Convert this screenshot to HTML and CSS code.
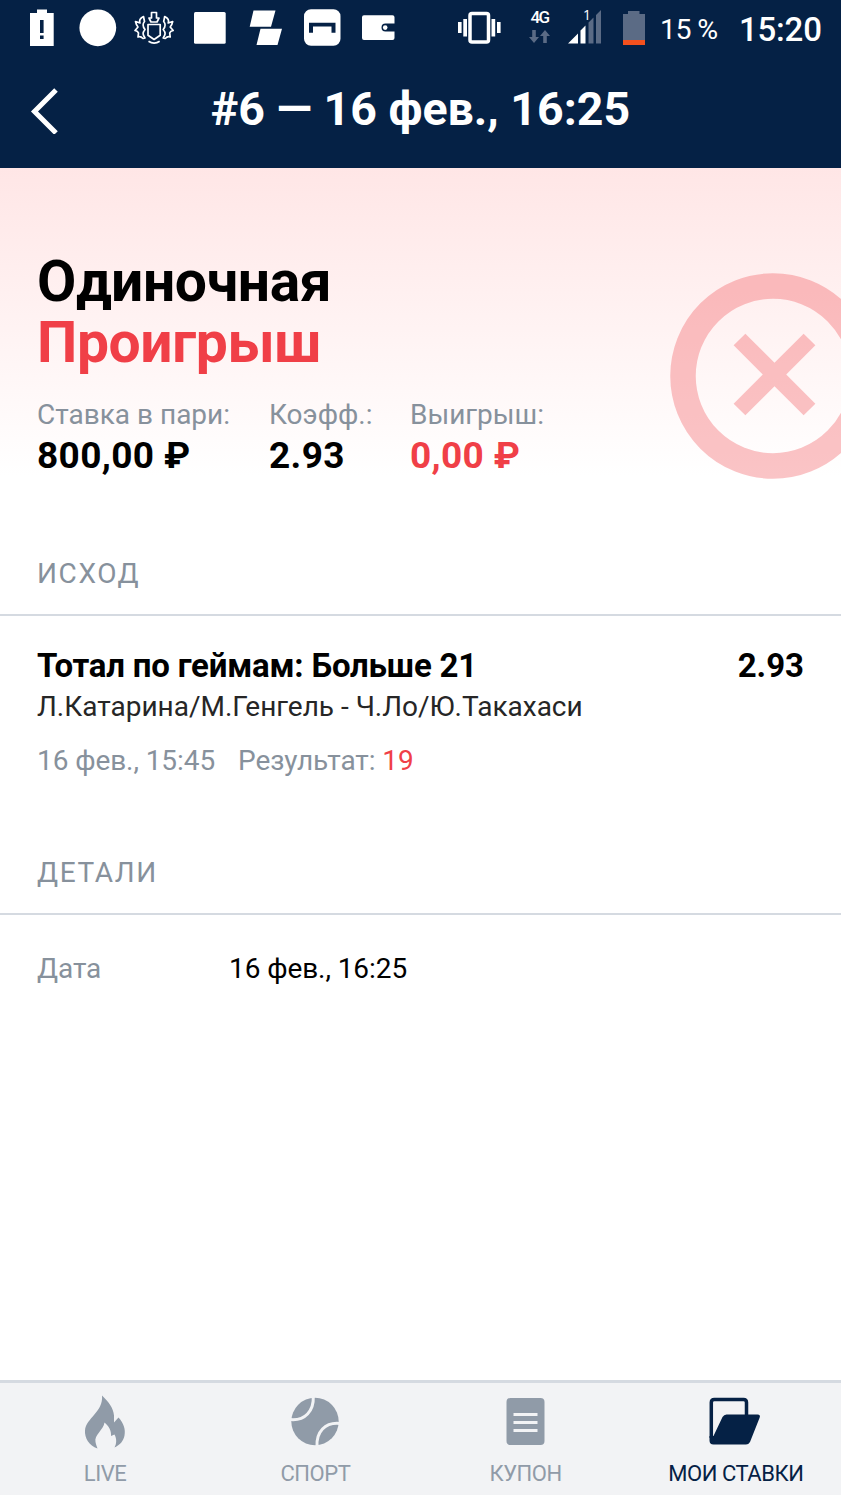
FILE: index.html
```html
<!DOCTYPE html>
<html lang="ru">
<head>
<meta charset="utf-8">
<title>#6 — 16 фев., 16:25</title>
<link rel="stylesheet" href="styles.css">
</head>
<body>
<div class="app">
  <div class="status">
    <svg class="status-left" width="400" height="56" viewBox="0 0 400 56" fill="#fff">
      <path fill-rule="evenodd" d="M30 13h7v-3.500h10V13h6.700v33H30zM40 20v13h3.600V20zM40 35.500V39h3.600v-3.500z"/>
      <circle cx="97.800" cy="27.800" r="18.400"/>
      <g fill="none" stroke="#fff" stroke-width="1.700" stroke-linejoin="round">
        <path d="M148 24.500h12.200v10.800l-6.100 4.200-6.100-4.200z"/>
        <path d="M151.500 12.500h5v5.500h2.500l-2 4h-6l-2-4h2.500z"/>
        <path d="M143.500 16.500c-4 2-4.500 4-3.500 6.500l-4.500-1.500c.5 2.500 1 4 2.500 5.500l-3 3.500c2 .3 3 .8 3.500 2.500l-.5 4c2-.8 3-.6 5 1.500l2-.5c-2-3-3-5 0-8.500-2.500-3-3-5-.5-8zM164.700 16.500c4 2 4.500 4 3.500 6.500l4.500-1.500c-.5 2.500-1 4-2.500 5.500l3 3.500c-2 .3-3 .8-3.500 2.500l.5 4c-2-.8-3-.6-5 1.500l-2-.5c2-3 3-5 0-8.500 2.500-3 3-5 .5-8z"/>
        <path d="M148.500 41.300q5.600 3.600 11.200 0"/>
      </g>
      <rect x="194" y="12" width="31.700" height="31.700" rx="1.500"/>
      <path d="M253.500 10.500h22l-4.500 16.300h-21.300zM260.500 28.800h21.500L277.500 45h-21z"/>
      <path fill-rule="evenodd" d="M311 9.300h22.500a7 7 0 0 1 7 7v22.500a7 7 0 0 1-7 7H311a7 7 0 0 1-7-7V16.300a7 7 0 0 1 7-7zM309 22.700v10h4v-6.200h18.500v6.200h4v-10z"/>
      <path d="M364 15.300h28.500a2 2 0 0 1 2 2v6.200h-9a4 4 0 0 0 0 8h9v6.500a2 2 0 0 1-2 2H364a2 2 0 0 1-2-2V17.300a2 2 0 0 1 2-2z"/>
      <circle cx="385.200" cy="27.600" r="2.300"/>
    </svg>
    <svg class="vibrate" width="43" height="56" viewBox="0 0 43 56" fill="#fff">
      <rect x="12" y="13.500" width="18.500" height="28.500" rx="2" fill="none" stroke="#fff" stroke-width="3.500"/>
      <path d="M0 22h3.600v11H0zM5.300 19h3.700v17.500H5.300zM33.500 19h3.700v17.500h-3.700zM39 22h3.600v11H39z"/>
    </svg>
    <div class="network">
      <span>4G</span>
      <svg width="21" height="14" viewBox="0 0 21 14" fill="#5b6b85"><path d="M3.200 0h3.600v7H10l-5 6-5-6h3.200zM14.200 13h3.600V6H21l-5-6-5 6h3.200z"/></svg>
    </div>
    <div class="signal">
      <svg width="34" height="34" viewBox="0 0 34 34"><path fill="#fff" d="M0 33.500L10 23.500v10zM12.500 20.500l5-5v18h-5z"/><path fill="#5b6b85" d="M20.500 12.500l5-5v26h-5zM28 5l5-5v33.500h-5z"/></svg>
      <span>1</span>
    </div>
    <svg class="battery" width="22" height="34" viewBox="0 0 22 34"><path fill="#5b6b85" d="M0 3h5V0h11.500v3H22v26H0z"/><path fill="#f4511e" d="M0 29h22v5H0z"/></svg>
    <span class="percent">15 %</span>
    <span class="clock">15:20</span>
  </div>
  <header class="header">
    <svg class="back" width="30" height="46" viewBox="0 0 30 46"><path d="M27 2L5.500 23.500 27 45" fill="none" stroke="#fff" stroke-width="5"/></svg>
    <h1 class="title">#6 — 16 фев., 16:25</h1>
  </header>
  <main class="content">
    <section class="hero">
      <h2 class="kind">Одиночная</h2>
      <p class="outcome">Проигрыш</p>
      <dl class="stats">
        <div class="stat stat-stake"><dt>Ставка в пари:</dt><dd>800,00 ₽</dd></div>
        <div class="stat stat-odds"><dt>Коэфф.:</dt><dd>2.93</dd></div>
        <div class="stat stat-win"><dt>Выигрыш:</dt><dd>0,00 ₽</dd></div>
      </dl>
      <svg class="badge" width="206" height="206" viewBox="0 0 206 206" fill="none" stroke="#f03f47" stroke-opacity=".31">
        <circle cx="103" cy="103" r="90" stroke-width="25.500"/>
        <path transform="translate(104.500 101.500) rotate(45)" d="M-8.300-49.500H8.300V-8.300H49.500V8.300H8.300V49.500H-8.300V8.300H-49.500V-8.300H-8.300z" fill="#f03f47" fill-opacity=".31" stroke="none"/>
      </svg>
    </section>
    <h3 class="section">ИСХОД</h3>
    <article class="bet">
      <div class="bet-main"><span class="market">Тотал по геймам: Больше 21</span><span class="odds">2.93</span></div>
      <div class="players">Л.Катарина/М.Генгель - Ч.Ло/Ю.Такахаси</div>
      <div class="meta"><span class="when">16 фев., 15:45</span><span class="result">Результат: <b>19</b></span></div>
    </article>
    <h3 class="section section-details">ДЕТАЛИ</h3>
    <div class="detail"><span class="detail-key">Дата</span><span class="detail-value">16 фев., 16:25</span></div>
  </main>
  <nav class="tabs">
    <a class="tab">
      <svg width="60" height="60" viewBox="0 0 60 60"><path fill="#909ba8" d="M27 2.500C33 8 38.500 15 39 22.500V29.500L43.500 24.500C48.500 30 50.800 36 49.500 42.500 48.500 48 45 52 39.500 54.500 41.500 51 42 46 39.500 41.500L36 43C36.500 38 34 33 29.500 29.500 28.500 37 19 42 20.500 49 21 52 22 54 22.500 55.500 14 52.500 9.500 45 10 37.500 11 25 28.500 19 27 2.500z"/></svg>
      <span>LIVE</span>
    </a>
    <a class="tab">
      <svg width="60" height="60" viewBox="0 0 60 60"><circle cx="30" cy="28.500" r="23.700" fill="#909ba8"/><path d="M5 26.500C20 28 29 18 28.300 3M55 30.500C40 29 31 39 32 54" fill="none" stroke="#f2f3f5" stroke-width="3"/></svg>
      <span>СПОРТ</span>
    </a>
    <a class="tab">
      <svg width="60" height="60" viewBox="0 0 60 60"><rect x="10.500" y="5" width="38" height="47" rx="4" fill="#909ba8"/><path d="M17.500 21.500h24M17.500 29.500h24M17.500 37.500h24" stroke="#f2f3f5" stroke-width="2.800"/></svg>
      <span>КУПОН</span>
    </a>
    <a class="tab tab-active">
      <svg width="60" height="60" viewBox="1 0 60 60"><path d="M6.300 45V9.500Q6.300 6.500 9.300 6.500H38.500Q41.500 6.500 41.500 9.500V24" fill="none" stroke="#052145" stroke-width="3.500"/><path fill="#052145" d="M4.500 43H8.500L17.500 24Q19 21.500 21.500 21.500H52.500Q56 21.500 54.500 25L45 49Q43.500 51.500 41 51.500H8.500Q4.500 51.500 4.500 47.500z"/></svg>
      <span>МОИ СТАВКИ</span>
    </a>
  </nav>
</div>
</body>
</html>
```

FILE: styles.css
```css
* { box-sizing: border-box; }
body { margin: 0; font-family: Roboto, "Liberation Sans", sans-serif; color: #000; background: #fff; }
h1, h2, h3, p, dl, dd { margin: 0; }
svg { display: block; flex: none; }
span, dt, dd, h1, h2, p { white-space: nowrap; }

.app { width: 841px; height: 1495px; display: flex; flex-direction: column; overflow: hidden; }

.status { flex: none; height: 56px; display: flex; align-items: flex-start; background: #052145; color: #fff; }
.vibrate { margin-left: 58px; }
.network { width: 21px; margin: 7px 0 0 28px; display: flex; flex-direction: column; align-items: center; }
.network span { font: 500 17px/20px Roboto, sans-serif; letter-spacing: -1.5px; }
.network svg { margin-top: 3px; }
.signal { position: relative; margin: 10px 0 0 18px; }
.signal span { position: absolute; left: 15px; top: -3px; font: 14px/16px "Open Sans", sans-serif; }
.battery { margin: 11px 0 0 21px; }
.percent { width: 60px; margin-left: 15px; font-size: 28.5px; line-height: 59px; letter-spacing: -.6px; }
.clock { margin-left: 19px; font-size: 33px; line-height: 59px; font-weight: 500; letter-spacing: -.2px; }

.header { flex: none; height: 112px; display: grid; grid-template-columns: 60px 1fr 60px; background: #052145; color: #fff; }
.back { margin: 32px 0 0 29px; }
.title { font-size: 46.5px; font-weight: 700; line-height: 56px; margin-top: 25px; text-align: center; }

.content { flex: 1; }
.hero { position: relative; height: 335px; padding: 83px 37px 0; background: linear-gradient(#ffe6e6, #fff 308px); }
.kind, .outcome { font-size: 57px; font-weight: 700; line-height: 61px; letter-spacing: -.4px; }
.outcome { color: #f03f47; }
.stats { display: flex; margin-top: 24px; }
.stat-stake { width: 232px; }
.stat-odds { width: 141px; }
.stat dt { font-size: 28px; line-height: 36px; color: #87919c; }
.stat dd { font-size: 37px; font-weight: 700; line-height: 45px; letter-spacing: .35px; }
.stat-win dd { color: #f03f47; }
.badge { position: absolute; left: 670px; top: 105px; }

.section { height: 113px; padding: 53px 37px 0; border-bottom: 2px solid #d5dae1; font-size: 28px; font-weight: 400; line-height: 36px; letter-spacing: 1.6px; color: #87919c; }
.bet { padding: 30px 37px 0; height: 186px; }
.bet-main { display: flex; justify-content: space-between; font-size: 33px; font-weight: 700; line-height: 40px; }
.market { letter-spacing: -.2px; }
.players { margin-top: 1px; font-size: 28px; line-height: 40px; color: #262626; }
.meta { display: flex; gap: 23px; margin-top: 14px; font-size: 28px; line-height: 40px; letter-spacing: -.08px; color: #87919c; }
.meta b { font-weight: 400; color: #f03f47; }
.detail { display: flex; padding: 34px 37px 0; font-size: 28px; line-height: 40px; letter-spacing: -.08px; }
.detail-key { width: 192px; color: #87919c; }

.tabs { flex: none; height: 115px; display: grid; grid-template-columns: repeat(4, 1fr); border-top: 3px solid #d5dae1; background: #f2f3f5; }
.tab { display: flex; flex-direction: column; align-items: center; padding-top: 10px; font-size: 22px; line-height: 26px; letter-spacing: -.45px; color: #909ba8; }
.tab span { margin-top: 8px; }
.tab-active { color: #052145; }
```
